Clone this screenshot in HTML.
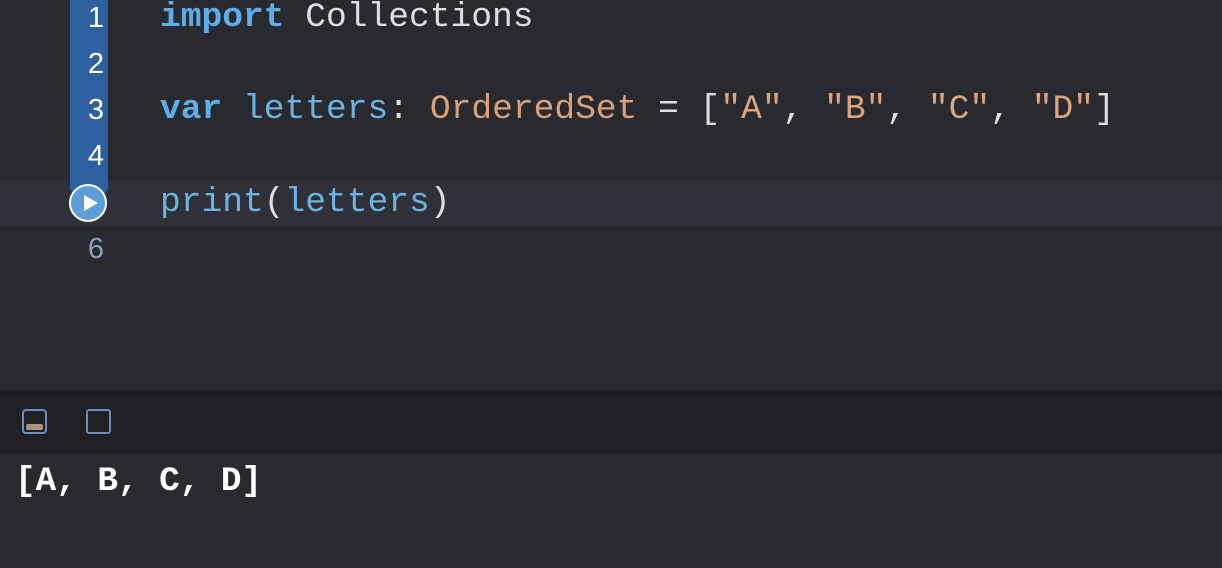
<!DOCTYPE html>
<html><head><style>
body{margin:0;width:1222px;height:568px;overflow:hidden;background:#292a30;font-family:"Liberation Mono",monospace;position:relative}
.ed{position:absolute;left:0;top:0;width:1222px;height:390px;background:#292a30}
.hl{position:absolute;left:0;top:180px;width:1222px;height:46px;background:#2f3038}
.gut{position:absolute;left:70px;top:-10px;width:38px;height:205px;background:#2e5f9e;border-radius:8px}
.ln{position:absolute;left:70px;width:34px;text-align:right;font-family:"Liberation Sans",sans-serif;font-size:29px;color:#fff;line-height:46px}
.code{position:absolute;left:160px;font-size:34.6px;line-height:46px;color:#dfdfe0;white-space:pre}
.k{color:#5dadeb;font-weight:bold}.v{color:#6bb3e0}.t{color:#d9a07a}.s{color:#e0a47c}
.play{position:absolute;left:69px;top:184px;width:38px;height:38px;border-radius:50%;background:#5c9fd8;border:2px solid #fff;box-sizing:border-box}
.play:after{content:"";position:absolute;left:13px;top:9px;border-left:14px solid #fff;border-top:8px solid transparent;border-bottom:8px solid transparent}
.div{position:absolute;left:0;top:390px;width:1222px;height:5px;background:#1d1e22}
.tb{position:absolute;left:0;top:395px;width:1222px;height:58px;background:#202125}
.out{position:absolute;left:15px;top:459px;font-size:34.3px;font-weight:bold;color:#fff;line-height:46px}
</style></head><body>
<div class="ed"></div>
<div class="hl"></div>
<div class="gut"></div>
<div class="ln" style="top:-5px">1</div>
<div class="ln" style="top:41px">2</div>
<div class="ln" style="top:87px">3</div>
<div class="ln" style="top:133px">4</div>
<div class="play"></div>
<div class="ln" style="top:226px;color:#8aa0c0">6</div>
<div class="code" style="top:-5px"><span class="k">import</span> Collections</div>
<div class="code" style="top:87px"><span class="k">var</span> <span class="v">letters</span>: <span class="t">OrderedSet</span> = [<span class="s">"A"</span>, <span class="s">"B"</span>, <span class="s">"C"</span>, <span class="s">"D"</span>]</div>
<div class="code" style="top:180px"><span class="v">print</span>(<span class="v">letters</span>)</div>
<div class="div"></div>
<div class="tb">
<div style="position:absolute;left:22px;top:14px;width:25px;height:25px;border:2px solid #6b8fb8;border-radius:4px;box-sizing:border-box"><div style="position:absolute;left:2px;bottom:2px;width:17px;height:6px;background:#b09080;border-radius:2px"></div></div>
<div style="position:absolute;left:86px;top:14px;width:25px;height:25px;border:2px solid #6b8fb8;border-radius:3px;box-sizing:border-box"></div>
</div>
<div class="out">[A, B, C, D]</div>
</body></html>
